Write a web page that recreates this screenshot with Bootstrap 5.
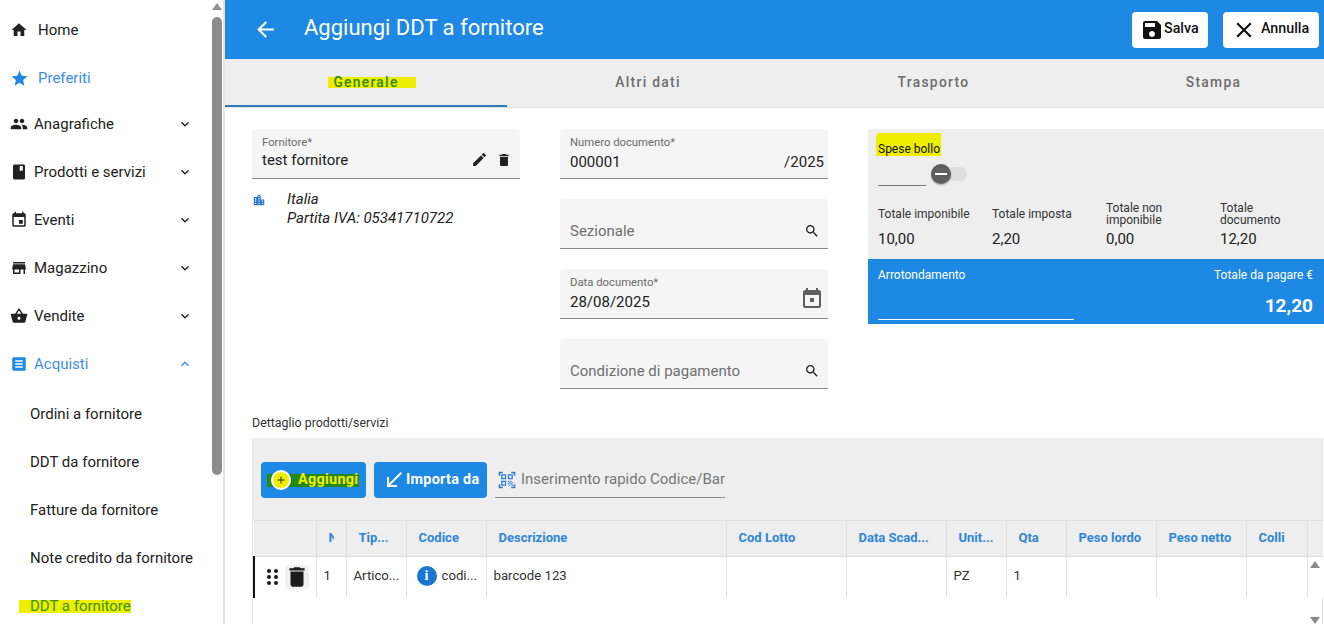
<!DOCTYPE html>
<html lang="it"><head><meta charset="utf-8"><title>Aggiungi DDT a fornitore</title>
<link href="https://cdn.jsdelivr.net/npm/bootstrap@5.3.0/dist/css/bootstrap.min.css" rel="stylesheet">
<style>
html,body{height:624px;overflow:hidden;background:#fff}
body{font-family:Roboto,"Liberation Sans",sans-serif;color:#212121;font-size:14px}
svg{fill:currentColor;flex:none;display:block}
.shell{width:1324px;height:624px;overflow:hidden}
.side{width:225px;flex:none;border-right:2px solid #e4e4e4;height:624px;overflow:hidden}
.sidelist{width:212px;flex:none;padding-top:6px}
.sbar{width:10px;flex:none}
.sbar-up{width:0;height:0;border:5px solid transparent;border-top:0;border-bottom:7px solid #909090;margin:3px auto 7px}
.sbar-th{height:458px;background:#8c8c8c;border-radius:5px}
.sitem{height:48px;display:flex;align-items:center;padding-left:10px;padding-right:19px;font-size:15px;color:#212121;text-decoration:none;white-space:nowrap}
.sitem .lab{margin-left:6px}
.sitem.top .lab{margin-left:10px}
.sitem.top.on .lab{margin-left:9px}
.sitem.on{color:#3d8fdc}
.sitem.on svg:first-child{color:#1e88e5}
.sitem.pull{margin-top:-2px}
.sitem.sub{padding-left:30px}
.sitem.sub.first{margin-top:2px}
.hi-nav{background:#eeee00;color:#3b9400;padding:0 0 0 11px;margin-left:-11px;line-height:13px}
.main{flex:1 1 auto;min-width:0;height:624px;overflow:hidden}
.topbar{height:59px;background:#1e88e5;color:#fff;padding:0 5px 0 28px}
.topbar h1{font-size:22px;font-weight:400;margin:0 0 3px 26px;color:#fff}
.tb-btn{height:36px;background:#fff;border:0;border-radius:4px;color:#111;font-size:14.3px;font-weight:500;padding:0;display:flex;align-items:center}
.tb-btn span{margin-bottom:2px}
.tb-save{width:76px;padding-left:8px;margin-right:15px}
.tb-cancel{width:96px;padding-left:8px}
.tabsbar{height:49px;background:#eee;border-bottom:1px solid #e2e2e2;overflow:hidden}
.tabx{width:282px;flex:none;height:48px;display:flex;align-items:center;justify-content:center;font-size:13.8px;font-weight:500;letter-spacing:1.3px;color:#6d6d6d;padding-bottom:2px}
.tabx.act{border-bottom:2px solid #2f79b8;padding-bottom:0}
.hi-tab{background:#eeee00;color:#2f8500;padding:0 17px 0 5px;margin-left:12px;line-height:11px}
.tabshift-a{margin-left:7px}
.tabshift-b{margin-left:3px}
.formarea{padding:21px 0 0 27px;gap:40px}
.fcol{width:268px;flex:none}
.fstack{gap:20px}
.fld{height:50px;background:#f5f5f5;border-bottom:1px solid #8a8a8a;border-radius:4px 4px 0 0;padding:0 4px 0 10px}
.fld-ph-wrap{padding-bottom:6px}
.fld-ph-wrap svg{margin-bottom:3px}
.fld-lab{font-size:11.3px;color:#6b6b6b;line-height:13px;padding-top:7px}
.fld-val{font-size:15px;line-height:20px;margin-top:3px;color:#212121}
.fld-val.up1{margin-top:1px}
.fld-ph{font-size:15px;color:#6f6f6f}
.calic{color:#5f5f5f;margin-top:-3px}
.addr{font-style:italic;font-size:15px;line-height:19px;margin-top:11px}
.addr svg{color:#2f76c9;margin-top:3px;margin-right:21px}
.tots{flex:1 1 auto;width:456px;height:195px;background:#eee}
.tots-top{height:130px;padding:4px 0 0 8px}
.hi-bollo{display:block;width:65px;background:#eeee00;color:#111;font-size:12px;line-height:23px;padding:5px 0 0 2px;height:23px;border-radius:4px 0 0 0;white-space:nowrap}
.toglin{width:48px;border-bottom:1px solid #777;height:30px;margin-left:2px}
.togwrap{height:30px}
.togtrack{width:27px;height:14px;background:#dedede;border-radius:7px;margin-left:14px;position:relative;margin-top:11px}
.togthumb{position:absolute;left:-9px;top:-3px;width:20px;height:20px;border-radius:50%;background:#5f5f5f;box-shadow:0 1px 2px #0005}
.togthumb::after{content:"";position:absolute;left:4px;right:4px;top:9px;height:2px;background:#fff}
.totrow{padding-left:2px;margin-top:16px}
.totc{width:114px;flex:none;font-size:12px;line-height:12px;color:#333}
.totl{height:24px;display:flex;align-items:center;padding-right:19px}
.totv{font-size:15px;line-height:20px;margin-top:3px;color:#212121}
.tots-blue{height:65px;background:#1e88e5;color:#fff;padding:0 11px 0 10px;font-size:12px}
.arr-lin{width:196px;border-bottom:1px solid #fff;margin-top:37px}
.tpag{font-size:12px;line-height:14px;padding-top:9px}
.tval{font-size:19px;font-weight:700;line-height:24px;margin-top:12px}
.dettlab{font-size:12.4px;line-height:14px;margin:27px 0 8px 27px;color:#333}
.gbox{margin-left:27px;width:1071px;border-left:1px solid #e4e4e4;border-right:1px solid #e4e4e4;height:186px;position:relative}
.toolb{height:82px;background:#eee;padding:24px 0 0 8px;gap:8px}
.tbtn{height:36px;background:#1e88e5;border:0;border-radius:4px;color:#fff;font-weight:700;font-size:14.4px;display:flex;align-items:center;padding:0;letter-spacing:.3px}
.tb-agg{width:105px;padding-left:9px}
.bandg{background:#27881a;color:#eeee00;display:flex;align-items:center;height:13px;padding:0 1px 0 0;margin-left:-3px}
.bandg .cir{width:20px;height:20px;border-radius:50%;background:#eeee00;border:2px solid #fff;margin-right:7px;margin-left:4px;color:#333;display:flex;align-items:center;justify-content:center}
.tb-imp{width:113px;padding-left:8px}
.quick{width:230px;height:36px;border-bottom:1px solid #8a8a8a;color:#777;font-size:15px;white-space:nowrap;overflow:hidden;padding-left:2px}
.quick svg{color:#2f7fcf;margin-right:4px}
.tabg{table-layout:fixed;width:1070px;margin:0;border-collapse:collapse;font-size:13.2px}
.tabg th{height:36px;background:#eee;color:#2f86d8;font-weight:700;font-size:13px;border:1px solid #dedede;border-left:0;padding:0 0 2px 12px;white-space:nowrap;overflow:hidden;vertical-align:middle;box-shadow:none}
.tabg td{height:41px;background:#fff;border:0;border-right:1px solid #e4e4e4;padding:0 0 3px 7px;white-space:nowrap;overflow:hidden;vertical-align:middle;color:#333;box-shadow:none}
.tabg th.nob,.tabg td.nob{border-right:0}
.clipn{display:block;width:5px;overflow:hidden}
.tabg td.rowh{border-left:2px solid #111;padding:0 0 0 12px}
.trash{width:24px;height:24px;background:#f0f0f0;border-radius:4px;display:flex;align-items:center;justify-content:center;color:#1c1c1c;margin-left:7px}
.dots{width:11px;display:grid;grid-template-columns:4px 4px;column-gap:3px;row-gap:2px}
.dots i{width:4px;height:4px;border-radius:50%;background:#1c1c1c;display:block}
.infoc{width:20px;height:20px;border-radius:50%;background:#1976d2;color:#fff;font-family:"Liberation Serif",serif;font-weight:700;font-size:14px;line-height:20px;text-align:center;margin:0 5px 0 3px;flex:none}
.vs-up,.vs-dn{position:absolute;right:2px;width:0;height:0;border:5px solid transparent}
.vs-up{top:123px;border-top:0;border-bottom:7px solid #8a8a8a}
.vs-dn{top:179px;border-bottom:0;border-top:7px solid #8a8a8a}
</style></head><body>
<div class="shell d-flex">
<aside class="side d-flex">
<div class="sidelist">
<a class="sitem top"><svg width="18" height="18" viewBox="0 0 24 24"><path d="M10 20v-6h4v6h5v-8h3L12 3 2 12h3v8z"/></svg><span class="lab">Home</span></a>
<a class="sitem top on"><svg width="19" height="19" viewBox="0 0 24 24"><path d="M12 17.27L18.18 21l-1.64-7.03L22 9.24l-7.19-.61L12 2 9.19 8.63 2 9.24l5.46 4.73L5.82 21z"/></svg><span class="lab">Preferiti</span></a>
<a class="sitem pull"><svg width="18" height="18" viewBox="0 0 24 24"><path d="M16 11c1.66 0 2.99-1.34 2.99-3S17.66 5 16 5c-1.66 0-3 1.34-3 3s1.34 3 3 3zm-8 0c1.66 0 2.99-1.34 2.99-3S9.66 5 8 5C6.34 5 5 6.34 5 8s1.34 3 3 3zm0 2c-2.33 0-7 1.17-7 3.5V19h14v-2.5c0-2.33-4.67-3.5-7-3.5zm8 0c-.29 0-.62.02-.97.05 1.16.84 1.97 1.97 1.97 3.45V19h6v-2.5c0-2.33-4.67-3.5-7-3.5z"/></svg><span class="lab">Anagrafiche</span><svg class="ms-auto" width="16" height="16" viewBox="0 0 24 24"><path d="M16.59 8.59L12 13.17 7.41 8.59 6 10l6 6 6-6z"/></svg></a>
<a class="sitem"><svg width="18" height="18" viewBox="0 0 24 24"><path d="M18 2H6c-1.1 0-2 .9-2 2v16c0 1.1.9 2 2 2h12c1.1 0 2-.9 2-2V4c0-1.1-.9-2-2-2zM13 4h4v7l-2-1.5L13 11V4z" fill-rule="evenodd"/></svg><span class="lab">Prodotti e servizi</span><svg class="ms-auto" width="16" height="16" viewBox="0 0 24 24"><path d="M16.59 8.59L12 13.17 7.41 8.59 6 10l6 6 6-6z"/></svg></a>
<a class="sitem"><svg width="18" height="18" viewBox="0 0 24 24"><path d="M17 12h-5v5h5v-5zM16 1v2H8V1H6v2H5c-1.11 0-1.99.9-1.99 2L3 19c0 1.1.89 2 2 2h14c1.1 0 2-.9 2-2V5c0-1.1-.9-2-2-2h-1V1h-2zm3 18H5V8h14v11z"/></svg><span class="lab">Eventi</span><svg class="ms-auto" width="16" height="16" viewBox="0 0 24 24"><path d="M16.59 8.59L12 13.17 7.41 8.59 6 10l6 6 6-6z"/></svg></a>
<a class="sitem"><svg width="18" height="18" viewBox="0 0 24 24"><path d="M20 4H4v2h16V4zm1 10v-2l-1-5H4l-1 5v2h1v6h10v-6h4v6h2v-6h1zm-9 4H6v-4h6v4z"/></svg><span class="lab">Magazzino</span><svg class="ms-auto" width="16" height="16" viewBox="0 0 24 24"><path d="M16.59 8.59L12 13.17 7.41 8.59 6 10l6 6 6-6z"/></svg></a>
<a class="sitem"><svg width="18" height="18" viewBox="0 0 24 24"><path d="M17.21 9l-4.38-6.56c-.19-.28-.51-.42-.83-.42-.32 0-.64.14-.83.43L6.79 9H2c-.55 0-1 .45-1 1 0 .09.01.18.04.27l2.54 9.27c.23.84 1 1.46 1.92 1.46h13c.92 0 1.69-.62 1.93-1.46l2.54-9.27L23 10c0-.55-.45-1-1-1h-4.79zM9 9l3-4.4L15 9H9zm3 8c-1.1 0-2-.9-2-2s.9-2 2-2 2 .9 2 2-.9 2-2 2z"/></svg><span class="lab">Vendite</span><svg class="ms-auto" width="16" height="16" viewBox="0 0 24 24"><path d="M16.59 8.59L12 13.17 7.41 8.59 6 10l6 6 6-6z"/></svg></a>
<a class="sitem on"><svg width="18" height="18" viewBox="0 0 24 24"><path fill-rule="evenodd" d="M19 3H5c-1.1 0-2 .9-2 2v14c0 1.1.9 2 2 2h14c1.1 0 2-.9 2-2V5c0-1.1-.9-2-2-2zM7 7h10v2H7zm0 4h10v2H7zm0 4h10v2H7z"/></svg><span class="lab">Acquisti</span><svg class="ms-auto" width="16" height="16" viewBox="0 0 24 24"><path d="M12 8l-6 6 1.41 1.41L12 10.83l4.59 4.58L18 14z"/></svg></a>
<a class="sitem sub first">Ordini a fornitore</a>
<a class="sitem sub">DDT da fornitore</a>
<a class="sitem sub">Fatture da fornitore</a>
<a class="sitem sub">Note credito da fornitore</a>
<a class="sitem sub"><span class="hi-nav">DDT a fornitore</span></a>
</div>
<div class="sbar"><div class="sbar-up"></div><div class="sbar-th"></div></div>
</aside>
<main class="main">
<div class="topbar d-flex align-items-center">
<svg width="25" height="25" viewBox="0 0 24 24"><path d="M20 11H7.83l5.59-5.59L12 4l-8 8 8 8 1.41-1.41L7.83 13H20v-2z"/></svg>
<h1>Aggiungi DDT a fornitore</h1>
<button class="tb-btn tb-save ms-auto"><svg width="24" height="24" viewBox="0 0 24 24"><path d="M17 3H5c-1.11 0-2 .9-2 2v14c0 1.1.89 2 2 2h14c1.1 0 2-.9 2-2V7l-4-4zm-5 16c-1.66 0-3-1.34-3-3s1.34-3 3-3 3 1.34 3 3-1.34 3-3 3zm3-10H5V5h10v4z"/></svg><span>Salva</span></button>
<button class="tb-btn tb-cancel"><svg class="me-1" width="26" height="26" viewBox="0 0 24 24"><path d="M19 6.41L17.59 5 12 10.59 6.41 5 5 6.41 10.59 12 5 17.59 6.41 19 12 13.41 17.59 19 19 17.59 13.41 12z"/></svg><span>Annulla</span></button>
</div>
<div class="tabsbar d-flex">
<div class="tabx act"><span class="hi-tab">Generale</span></div>
<div class="tabx">Altri dati</div>
<div class="tabx"><span class="tabshift-a">Trasporto</span></div>
<div class="tabx"><span class="tabshift-b">Stampa</span></div>
</div>
<div class="formarea d-flex">
<div class="fcol">
<div class="fld"><div class="fld-lab">Fornitore*</div><div class="d-flex align-items-center"><div class="fld-val up1 flex-grow-1">test fornitore</div><svg class="me-1" width="17" height="17" viewBox="0 0 24 24"><path d="M3 17.25V21h3.75L17.81 9.94l-3.75-3.75L3 17.25zM20.71 7.04c.39-.39.39-1.02 0-1.41l-2.34-2.34c-.39-.39-1.02-.39-1.41 0l-1.83 1.83 3.75 3.75 1.83-1.83z"/></svg><svg class="ms-1 me-1" width="16" height="16" viewBox="0 0 24 24"><path d="M6 19c0 1.1.9 2 2 2h8c1.1 0 2-.9 2-2V7H6v12zM19 4h-3.5l-1-1h-5l-1 1H5v2h14V4z"/></svg></div></div>
<div class="addr d-flex"><svg width="14" height="14" viewBox="0 0 24 24"><path d="M15 11V5l-3-3-3 3v2H3v14h18V11h-6zm-8 8H5v-2h2v2zm0-4H5v-2h2v2zm0-4H5V9h2v2zm6 8h-2v-2h2v2zm0-4h-2v-2h2v2zm0-4h-2V9h2v2zm0-4h-2V5h2v2zm6 12h-2v-2h2v2zm0-4h-2v-2h2v2z"/></svg><div>Italia<br>Partita IVA: 05341710722</div></div>
</div>
<div class="fcol d-flex flex-column fstack">
<div class="fld"><div class="fld-lab">Numero documento*</div><div class="d-flex"><div class="fld-val flex-grow-1">000001</div><div class="fld-val">/2025</div></div></div>
<div class="fld fld-ph-wrap d-flex align-items-end"><div class="fld-ph flex-grow-1">Sezionale</div><svg class="me-1" width="16" height="16" viewBox="0 0 24 24"><path d="M15.5 14h-.79l-.28-.27C15.41 12.59 16 11.11 16 9.5 16 5.91 13.09 3 9.5 3S3 5.91 3 9.5 5.91 16 9.5 16c1.61 0 3.09-.59 4.23-1.57l.27.28v.79l5 4.99L20.49 19l-4.99-5zm-6 0C7.01 14 5 11.99 5 9.5S7.01 5 9.5 5 14 7.01 14 9.5 11.99 14 9.5 14z"/></svg></div>
<div class="fld"><div class="fld-lab">Data documento*</div><div class="d-flex"><div class="fld-val flex-grow-1">28/08/2025</div><svg class="calic" width="24" height="24" viewBox="0 0 24 24"><path d="M19 4h-1V2h-2v2H8V2H6v2H5c-1.1 0-2 .9-2 2v14c0 1.1.9 2 2 2h14c1.1 0 2-.9 2-2V6c0-1.1-.9-2-2-2zm0 16H5V9h14v11zM14 12h-4v4h4z"/></svg></div></div>
<div class="fld fld-ph-wrap d-flex align-items-end"><div class="fld-ph flex-grow-1">Condizione di pagamento</div><svg class="me-1" width="16" height="16" viewBox="0 0 24 24"><path d="M15.5 14h-.79l-.28-.27C15.41 12.59 16 11.11 16 9.5 16 5.91 13.09 3 9.5 3S3 5.91 3 9.5 5.91 16 9.5 16c1.61 0 3.09-.59 4.23-1.57l.27.28v.79l5 4.99L20.49 19l-4.99-5zm-6 0C7.01 14 5 11.99 5 9.5S7.01 5 9.5 5 14 7.01 14 9.5 11.99 14 9.5 14z"/></svg></div>
</div>
<div class="tots">
<div class="tots-top">
<span class="hi-bollo">Spese bollo</span>
<div class="togwrap d-flex align-items-start"><div class="toglin"></div><div class="togtrack"><div class="togthumb"></div></div></div>
<div class="totrow d-flex">
<div class="totc"><div class="totl">Totale imponibile</div><div class="totv">10,00</div></div>
<div class="totc"><div class="totl">Totale imposta</div><div class="totv">2,20</div></div>
<div class="totc"><div class="totl">Totale non imponibile</div><div class="totv">0,00</div></div>
<div class="totc"><div class="totl">Totale documento</div><div class="totv">12,20</div></div>
</div>
</div>
<div class="tots-blue d-flex justify-content-between">
<div><div class="tpag">Arrotondamento</div><div class="arr-lin"></div></div>
<div class="text-end"><div class="tpag">Totale da pagare €</div><div class="tval">12,20</div></div>
</div>
</div>
</div>
<div class="dettlab">Dettaglio prodotti/servizi</div>
<div class="gbox">
<div class="toolb d-flex">
<button class="tbtn tb-agg"><span class="bandg"><span class="cir"><svg width="12" height="12" viewBox="0 0 24 24"><path d="M19 13h-6v6h-2v-6H5v-2h6V5h2v6h6v2z"/></svg></span>Aggiungi</span></button>
<button class="tbtn tb-imp"><svg width="24" height="24" viewBox="0 0 24 24"><path d="M20 5.41L18.59 4 7 15.59V9H5v10h10v-2H8.41z"/></svg>Importa da</button>
<div class="quick d-flex align-items-center"><svg width="20" height="20" viewBox="0 0 24 24"><path d="M9.5 6.5v3h-3v-3h3M11 5H5v6h6V5zm-1.5 9.5v3h-3v-3h3M11 13H5v6h6v-6zm6.5-6.5v3h-3v-3h3M19 5h-6v6h6V5zm-6 8h1.5v1.5H13V13zm1.5 1.5H16V16h-1.5v-1.5zM16 13h1.5v1.5H16V13zm-3 3h1.5v1.5H13V16zm1.5 1.5H16V19h-1.5v-1.5zM16 16h1.5v1.5H16V16zm1.5-1.5H19V16h-1.5v-1.5zm0 3H19V19h-1.5v-1.5zM22 7h-2V4h-3V2h5v5zm0 15v-5h-2v3h-3v2h5zM2 22h5v-2H4v-3H2v5zM2 2v5h2V4h3V2H2z"/></svg>Inserimento rapido Codice/Bar</div>
</div>
<table class="table tabg">
<colgroup><col style="width:62px"><col style="width:30px"><col style="width:60px"><col style="width:80px"><col style="width:240px"><col style="width:120px"><col style="width:100px"><col style="width:60px"><col style="width:60px"><col style="width:90px"><col style="width:90px"><col style="width:61px"><col></colgroup>
<thead><tr><th></th><th><span class="clipn">N</span></th><th>Tip...</th><th>Codice</th><th>Descrizione</th><th>Cod Lotto</th><th>Data Scad...</th><th>Unit...</th><th>Qta</th><th>Peso lordo</th><th>Peso netto</th><th>Colli</th><th class="nob"></th></tr></thead>
<tbody><tr>
<td class="rowh"><div class="d-flex align-items-center"><div class="dots"><i></i><i></i><i></i><i></i><i></i><i></i></div><div class="trash"><svg width="26" height="26" viewBox="0 0 24 24"><path d="M6 19c0 1.1.9 2 2 2h8c1.1 0 2-.9 2-2V7H6v12zM19 4h-3.5l-1-1h-5l-1 1H5v2h14V4z"/></svg></div></div></td>
<td>1</td><td>Artico...</td><td><div class="d-flex align-items-center"><div class="infoc">i</div>codi...</div></td><td>barcode 123</td><td></td><td></td><td>PZ</td><td>1</td><td></td><td></td><td></td><td class="nob"></td>
</tr></tbody>
</table>
<div class="vs-up"></div><div class="vs-dn"></div>
</div>
</main>
</div>
<script src="https://cdn.jsdelivr.net/npm/bootstrap@5.3.0/dist/js/bootstrap.bundle.min.js"></script>
</body></html>
